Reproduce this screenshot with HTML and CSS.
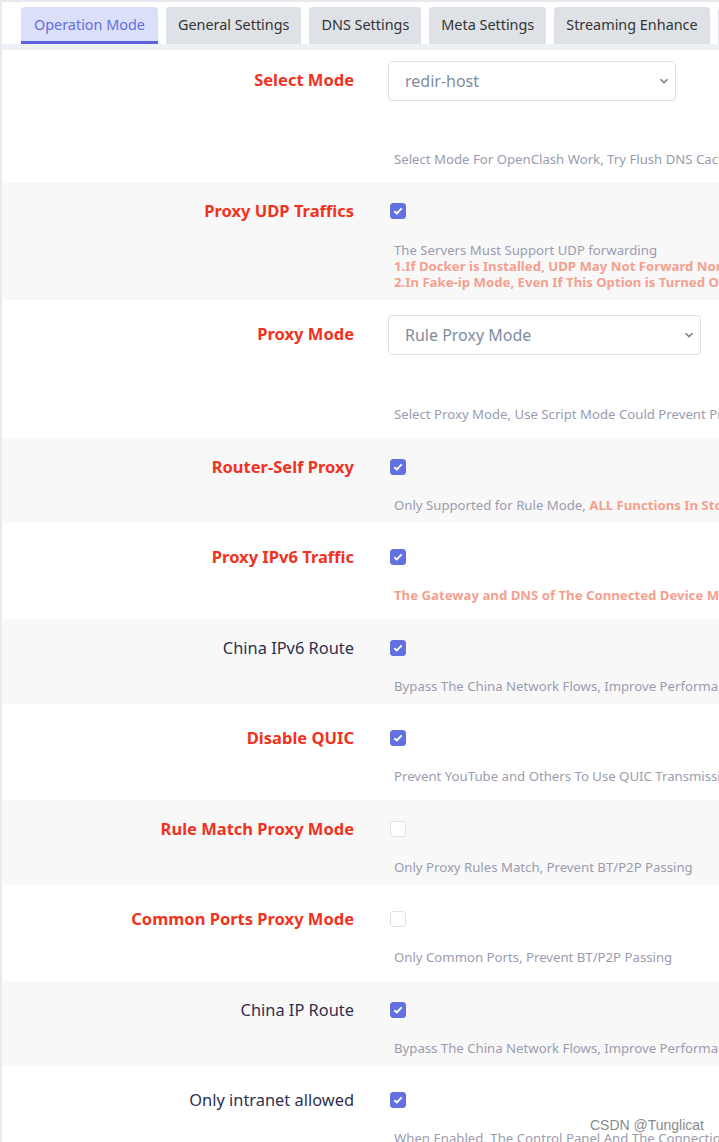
FILE: index.html
```html
<!DOCTYPE html>
<html lang="en">
<head>
<meta charset="utf-8">
<title>OpenClash - Operation Mode</title>
<link rel="stylesheet" href="styles.css">
</head>
<body>
<div class="page">
  <div class="tabs">
    <div class="tab active">Operation Mode</div>
    <div class="tab">General Settings</div>
    <div class="tab">DNS Settings</div>
    <div class="tab">Meta Settings</div>
    <div class="tab">Streaming Enhance</div>
    <div class="tab">Rules Setting</div>
  </div>
  <div class="rows">
    <div class="row white r-sel1">
      <div class="label red lh-sel">Select Mode</div>
      <div class="field">
        <div class="select s1"><span>redir-host</span><svg width="10" height="6" viewBox="0 0 10 6"><path d="M1.5 1.2 L5 4.6 L8.5 1.2" fill="none" stroke="#7b8494" stroke-width="1.6"/></svg></div>
        <div class="desc m-sel1">Select Mode For OpenClash Work, Try Flush DNS Cache If Network Error</div>
      </div>
    </div>

    <div class="row gray r-udp">
      <div class="label red">Proxy UDP Traffics</div>
      <div class="field">
        <div class="ctl"><span class="cb on"><svg width="10" height="8" viewBox="0 0 10 8"><path d="M1.3 4.2 L3.8 6.4 L8.7 1.4" fill="none" stroke="#fff" stroke-width="1.9"/></svg></span></div>
        <div class="desc m-udp">The Servers Must Support UDP forwarding<br><b class="warn">1.If Docker is Installed, UDP May Not Forward Normally</b><br><b class="warn">2.In Fake-ip Mode, Even If This Option is Turned Off, UDP Will Still Be Proxied</b></div>
      </div>
    </div>

    <div class="row white r-sel2">
      <div class="label red lh-sel">Proxy Mode</div>
      <div class="field">
        <div class="select s2"><span>Rule Proxy Mode</span><svg width="10" height="6" viewBox="0 0 10 6"><path d="M1.5 1.2 L5 4.6 L8.5 1.2" fill="none" stroke="#7b8494" stroke-width="1.6"/></svg></div>
        <div class="desc m-sel2">Select Proxy Mode, Use Script Mode Could Prevent Proxy BT traffics If Rules Support</div>
      </div>
    </div>

    <div class="row gray r-g">
      <div class="label red">Router-Self Proxy</div>
      <div class="field">
        <div class="ctl"><span class="cb on"><svg width="10" height="8" viewBox="0 0 10 8"><path d="M1.3 4.2 L3.8 6.4 L8.7 1.4" fill="none" stroke="#fff" stroke-width="1.9"/></svg></span></div>
        <div class="desc m-cb">Only Supported for Rule Mode, <b class="warn">ALL Functions In Stop Status When Disabled</b></div>
      </div>
    </div>

    <div class="row white r-w">
      <div class="label red">Proxy IPv6 Traffic</div>
      <div class="field">
        <div class="ctl"><span class="cb on"><svg width="10" height="8" viewBox="0 0 10 8"><path d="M1.3 4.2 L3.8 6.4 L8.7 1.4" fill="none" stroke="#fff" stroke-width="1.9"/></svg></span></div>
        <div class="desc m-cb"><b class="warn">The Gateway and DNS of The Connected Device Must be The Router IP, Disable IPv6 DHCP To Avoid Leakage</b></div>
      </div>
    </div>

    <div class="row gray r-g">
      <div class="label">China IPv6 Route</div>
      <div class="field">
        <div class="ctl"><span class="cb on"><svg width="10" height="8" viewBox="0 0 10 8"><path d="M1.3 4.2 L3.8 6.4 L8.7 1.4" fill="none" stroke="#fff" stroke-width="1.9"/></svg></span></div>
        <div class="desc m-cb">Bypass The China Network Flows, Improve Performance</div>
      </div>
    </div>

    <div class="row white r-w">
      <div class="label red">Disable QUIC</div>
      <div class="field">
        <div class="ctl"><span class="cb on"><svg width="10" height="8" viewBox="0 0 10 8"><path d="M1.3 4.2 L3.8 6.4 L8.7 1.4" fill="none" stroke="#fff" stroke-width="1.9"/></svg></span></div>
        <div class="desc m-cb">Prevent YouTube and Others To Use QUIC Transmission</div>
      </div>
    </div>

    <div class="row gray r-g">
      <div class="label red">Rule Match Proxy Mode</div>
      <div class="field">
        <div class="ctl"><span class="cb"></span></div>
        <div class="desc m-cb">Only Proxy Rules Match, Prevent BT/P2P Passing</div>
      </div>
    </div>

    <div class="row white r-w">
      <div class="label red">Common Ports Proxy Mode</div>
      <div class="field">
        <div class="ctl"><span class="cb"></span></div>
        <div class="desc m-cb">Only Common Ports, Prevent BT/P2P Passing</div>
      </div>
    </div>

    <div class="row gray r-g">
      <div class="label">China IP Route</div>
      <div class="field">
        <div class="ctl"><span class="cb on"><svg width="10" height="8" viewBox="0 0 10 8"><path d="M1.3 4.2 L3.8 6.4 L8.7 1.4" fill="none" stroke="#fff" stroke-width="1.9"/></svg></span></div>
        <div class="desc m-cb">Bypass The China Network Flows, Improve Performance</div>
      </div>
    </div>

    <div class="row white r-w">
      <div class="label">Only intranet allowed</div>
      <div class="field">
        <div class="ctl"><span class="cb on"><svg width="10" height="8" viewBox="0 0 10 8"><path d="M1.3 4.2 L3.8 6.4 L8.7 1.4" fill="none" stroke="#fff" stroke-width="1.9"/></svg></span></div>
        <div class="desc m-cb">When Enabled, The Control Panel And The Connection Port Only Allow Intranet Access</div>
      </div>
    </div>
  </div>
  <div class="watermark">CSDN @Tunglicat</div>
</div>
</body>
</html>
```

FILE: styles.css
```css
html, body {
  margin: 0;
  padding: 0;
  overflow: hidden;
  background: #ffffff;
}
body {
  font-family: "Noto Sans", "Open Sans", sans-serif;
  color: #32325d;
}
.page {
  position: relative;
  width: 719px;
  min-height: 1142px;
  border-top: 2px solid #e6e9ed;
  border-left: 2px solid #e8ebef;
  box-sizing: border-box;
  overflow: hidden;
}
.tabs {
  display: flex;
  gap: 8px;
  padding: 5px 0 0 19px;
  border-bottom: 6px solid #eef1f5;
  white-space: nowrap;
}
.tab {
  flex: none;
  height: 37px;
  box-sizing: border-box;
  padding: 0 12px;
  line-height: 35px;
  font-size: 14.4px;
  color: #333;
  background: #dee2e7;
  border-radius: 4px 4px 0 0;
}
.tab.active {
  padding: 0 13px;
  background: #dcdffa;
  color: #626ede;
  border-bottom: 3px solid #5e64e0;
}
.row {
  display: grid;
  grid-template-columns: 352px 1fr;
  column-gap: 34px;
  white-space: nowrap;
}
.white { background: #ffffff; }
.gray { background: #f8f8f9; }
.label {
  text-align: right;
  font-size: 16.4px;
  line-height: 24px;
  color: #2f2f4f;
}
.label.red {
  font-size: 16.5px;
  color: #f0321e;
  font-weight: 700;
}
.label.lh-sel { line-height: 38px; }
.field { min-width: 0; }
.ctl {
  height: 24px;
  display: flex;
  align-items: center;
}
.cb {
  width: 16px;
  height: 16px;
  margin-left: 2px;
  box-sizing: border-box;
  border-radius: 3px;
  border: 1px solid #dfe2e8;
  background: #fff;
  display: flex;
  align-items: center;
  justify-content: center;
}
.cb.on {
  background: #6370e0;
  border-color: #6370e0;
}
.select {
  height: 40px;
  box-sizing: border-box;
  border: 1px solid #dcdfe6;
  border-radius: 4px;
  display: flex;
  align-items: center;
  justify-content: space-between;
  padding: 0 6px 0 16px;
  font-size: 16px;
  color: #7f8ca0;
  background: #fff;
}
.s1 { width: 288px; }
.s2 { width: 313px; }
.desc {
  font-size: 13.2px;
  line-height: 16px;
  color: #9a9cae;
  padding-left: 6px;
}
.warn {
  color: #f4a08f;
  font-weight: 700;
}
.r-sel1 { padding: 11px 0 16px; }
.m-sel1 { margin-top: 50px; }
.r-sel2 { padding: 15px 0 16px; }
.m-sel2 { margin-top: 51px; }
.r-udp { padding: 16px 0 10px; }
.m-udp { margin-top: 19px; }
.r-g { padding: 17px 0 10px; }
.r-w { padding: 22px 0 16px; }
.m-cb { margin-top: 18px; }
.watermark {
  position: absolute;
  top: 1115px;
  right: 15px;
  font-family: "Liberation Sans", Arial, sans-serif;
  font-size: 14px;
  color: #8a8a8a;
}
```
